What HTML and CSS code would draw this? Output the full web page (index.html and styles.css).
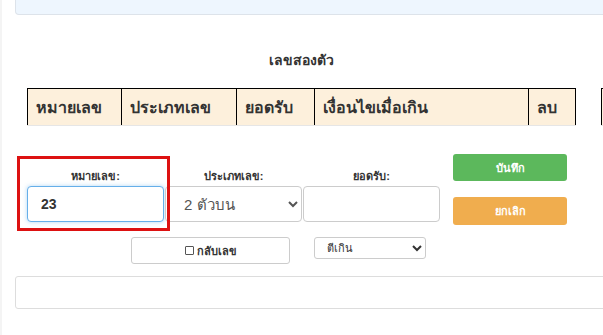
FILE: index.html
```html
<!DOCTYPE html>
<html lang="th">
<head>
<meta charset="UTF-8">
<meta name="viewport" content="width=device-width, initial-scale=1.0">
<title>เลขสองตัว</title>
<link rel="stylesheet" href="styles.css">
</head>
<body>

  <div class="page">
    <div class="top-panel"></div>

    <h3 class="title">เลขสองตัว</h3>

    <div class="tables">
      <table class="num-table main">
        <tr>
          <th class="c1">หมายเลข</th>
          <th class="c2">ประเภทเลข</th>
          <th class="c3">ยอดรับ</th>
          <th class="c4">เงื่อนไขเมื่อเกิน</th>
          <th class="c5">ลบ</th>
        </tr>
      </table>
      <table class="num-table side">
        <tr><th></th></tr>
      </table>
    </div>

    <form class="entry" id="entryForm">
      <span class="highlight"></span>
      <div class="fields">
        <div class="form-group">
          <label for="number">หมายเลข:</label>
          <input type="text" id="number" class="focused" value="23">
        </div>
        <div class="form-group">
          <label for="type">ประเภทเลข:</label>
          <select id="type">
            <option>2 ตัวบน</option>
            <option>2 ตัวล่าง</option>
          </select>
        </div>
        <div class="form-group">
          <label for="amount">ยอดรับ:</label>
          <input type="text" id="amount">
        </div>
        <div class="actions">
          <button type="button" class="btn btn-save">บันทึก</button>
          <button type="button" class="btn btn-cancel">ยกเลิก</button>
        </div>
        <div class="side-input"></div>
      </div>
      <div class="options">
        <label class="reverse"><span class="box"></span>กลับเลข</label>
        <select class="over">
          <option>ตีเกิน</option>
          <option>ตัดเกิน</option>
        </select>
      </div>
    </form>

    <div class="bottom-panel"></div>
  </div>

</body>
</html>
```

FILE: styles.css
```css
html, body {
  margin: 0;
  overflow: hidden;
}

body {
  font-family: Tahoma, "Liberation Sans", "Noto Sans", sans-serif;
  color: #333;
  background: #fff;
}

.page {
  width: 700px;
  min-height: 335px;
  border-left: 2px solid #f4f4f4;
  padding-left: 13px;
}

.top-panel {
  height: 14px;
  background-color: #eef6fe;
  border: 1px solid #dde3ea;
  border-top: none;
  border-radius: 0 0 0 4px;
}

.title {
  margin: 35px 0 0 0;
  width: 573px;
  text-align: center;
  font-size: 14px;
  line-height: 20px;
  font-weight: bold;
}

.tables {
  display: flex;
  gap: 25px;
  margin-top: 18px;
  padding-left: 12px;
}

.num-table {
  border-collapse: collapse;
  table-layout: fixed;
  height: 37px;
}

.num-table.main {
  width: 549px;
}

.num-table th {
  background-color: #fdf0dc;
  border-top: 1px solid #000;
  border-left: 1px solid #000;
  border-right: 1px solid #000;
  border-bottom: 1px solid #e6e6e6;
  text-align: left;
  font-size: 16px;
  padding: 0 8px;
  height: 36px;
}

.c1 { width: 76px; }
.c2 { width: 98px; }
.c3 { width: 60px; }
.c4 { width: 196px; }
.c5 { width: 30px; }

.num-table.side th {
  width: 40px;
  border-right: none;
}

.entry {
  position: relative;
  margin-top: 28px;
}

.highlight {
  position: absolute;
  left: 2px;
  top: 2px;
  width: 147px;
  height: 69px;
  border: 3px solid #dd1111;
  pointer-events: none;
}

.fields {
  display: flex;
  align-items: flex-start;
  padding-left: 12px;
}

.form-group {
  display: flex;
  flex-direction: column;
  width: 137px;
  margin-right: 1px;
}

.form-group label {
  display: block;
  text-align: center;
  font-size: 11px;
  font-weight: bold;
  line-height: 14px;
  margin-top: 15px;
  margin-bottom: 3px;
}

.form-group input,
.form-group select {
  width: 100%;
  height: 36px;
  box-sizing: border-box;
  border: 1px solid #ccc;
  border-radius: 4px;
  background: #fff;
  font-family: inherit;
  color: #555;
  font-size: 15px;
  padding: 0 13px;
}

.form-group select {
  padding: 0 12px 0 14px;
}

.form-group input.focused {
  border-color: #66afe9;
  box-shadow: 0 0 4px rgba(102, 175, 233, 0.5);
  font-weight: bold;
  font-size: 14px;
  color: #333;
}

.actions {
  display: flex;
  flex-direction: column;
  gap: 16px;
  margin-left: 12px;
  width: 114px;
}

.btn {
  height: 27px;
  border: none;
  border-radius: 3px;
  color: #fff;
  font-family: inherit;
  font-size: 11px;
  font-weight: bold;
  cursor: pointer;
}

.btn-save {
  background-color: #5cb85c;
}

.btn-cancel {
  height: 28px;
  background-color: #f0ad4e;
}

.side-input {
  width: 40px;
  height: 30px;
  margin-top: 40px;
  margin-left: 36px;
  border: 1px solid #ccc;
  border-radius: 4px;
}

.options {
  display: flex;
  align-items: flex-start;
  gap: 24px;
  margin-top: 11px;
  padding-left: 116px;
}

.reverse {
  display: flex;
  align-items: center;
  justify-content: center;
  width: 159px;
  height: 27px;
  box-sizing: border-box;
  border: 1px solid #ccc;
  border-radius: 3px;
  font-size: 11px;
  font-weight: bold;
}

.reverse .box {
  width: 7px;
  height: 7px;
  border: 1px solid #555;
  border-radius: 1px;
  margin-right: 3px;
}

.over {
  width: 112px;
  height: 22px;
  border: 1px solid #ccc;
  border-radius: 3px;
  background: #fff;
  font-family: inherit;
  font-size: 11px;
  color: #333;
  padding: 0 0 0 8px;
}

.bottom-panel {
  height: 31px;
  margin-top: 12px;
  border: 1px solid #ddd;
  border-radius: 3px;
}
```
